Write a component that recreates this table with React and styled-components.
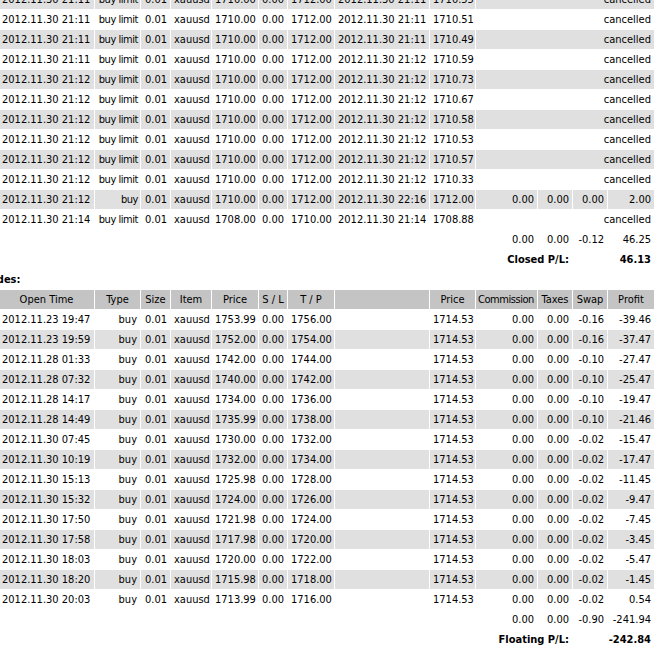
import React from "react";
import styled, { createGlobalStyle } from "styled-components";

const GlobalStyle = createGlobalStyle`
  html, body {
    margin: 0;
    padding: 0;
    background: #fff;
    overflow: hidden;
  }
  body {
    width: 654px;
    height: 649px;
  }
`;

// ticket, open time, type, size, item, price, s/l, t/p, close time, price, commission, taxes, swap, profit
const COLS = [54, 95, 45, 29, 40, 46, 28, 46, 94, 45, 61, 34, 34, 46];

const closed = [
  ["21:11", "buy limit", "1710.00", "1712.00", "21:11", "1710.55"],
  ["21:11", "buy limit", "1710.00", "1712.00", "21:11", "1710.51"],
  ["21:11", "buy limit", "1710.00", "1712.00", "21:11", "1710.49"],
  ["21:11", "buy limit", "1710.00", "1712.00", "21:12", "1710.59"],
  ["21:12", "buy limit", "1710.00", "1712.00", "21:12", "1710.73"],
  ["21:12", "buy limit", "1710.00", "1712.00", "21:12", "1710.67"],
  ["21:12", "buy limit", "1710.00", "1712.00", "21:12", "1710.58"],
  ["21:12", "buy limit", "1710.00", "1712.00", "21:12", "1710.53"],
  ["21:12", "buy limit", "1710.00", "1712.00", "21:12", "1710.57"],
  ["21:12", "buy limit", "1710.00", "1712.00", "21:12", "1710.33"],
  ["21:12", "buy", "1710.00", "1712.00", "22:16", "1712.00", ["0.00", "0.00", "0.00", "2.00"]],
  ["21:14", "buy limit", "1708.00", "1710.00", "21:14", "1708.88"],
];

const open = [
  ["2012.11.23 19:47", "1753.99", "1756.00", "-0.16", "-39.46"],
  ["2012.11.23 19:59", "1752.00", "1754.00", "-0.16", "-37.47"],
  ["2012.11.28 01:33", "1742.00", "1744.00", "-0.10", "-27.47"],
  ["2012.11.28 07:32", "1740.00", "1742.00", "-0.10", "-25.47"],
  ["2012.11.28 14:17", "1734.00", "1736.00", "-0.10", "-19.47"],
  ["2012.11.28 14:49", "1735.99", "1738.00", "-0.10", "-21.46"],
  ["2012.11.30 07:45", "1730.00", "1732.00", "-0.02", "-15.47"],
  ["2012.11.30 10:19", "1732.00", "1734.00", "-0.02", "-17.47"],
  ["2012.11.30 15:13", "1725.98", "1728.00", "-0.02", "-11.45"],
  ["2012.11.30 15:32", "1724.00", "1726.00", "-0.02", "-9.47"],
  ["2012.11.30 17:50", "1721.98", "1724.00", "-0.02", "-7.45"],
  ["2012.11.30 17:58", "1717.98", "1720.00", "-0.02", "-3.45"],
  ["2012.11.30 18:03", "1720.00", "1722.00", "-0.02", "-5.47"],
  ["2012.11.30 18:20", "1715.98", "1718.00", "-0.02", "-1.45"],
  ["2012.11.30 20:03", "1713.99", "1716.00", "-0.02", "0.54"],
];

const Sheet = styled.table`
  margin: -11px 0 0 -57px;
  border-collapse: separate;
  border-spacing: 1px;
  table-layout: fixed;
  width: ${COLS.reduce((a, b) => a + b, 0) + COLS.length + 1}px;
  font-family: "DejaVu Sans Condensed", "DejaVu Sans", sans-serif;
  font-stretch: condensed;
  font-size: 11px;
  color: #000;
`;

const Row = styled.tr`
  background: ${(p) => (p.$shade ? "#e0e0e0" : "transparent")};
`;

const HeadRow = styled.tr`
  background: #c4c4c4;
`;

const Cell = styled.td`
  box-sizing: border-box;
  height: 19px;
  padding: 1px 3px 0;
  line-height: 18px;
  white-space: nowrap;
  overflow: hidden;
  text-align: ${(p) => p.$align || "right"};
  font-weight: ${(p) => (p.$bold ? 700 : 400)};
  letter-spacing: ${(p) => (p.$tight ? "-0.45px" : "0")};
  ${(p) => p.$tight && "padding-left: 1px; padding-right: 2px;"}
`;

const HeadCell = styled(Cell)`
  text-align: center;
`;

const ClosedRow = ({ r, i }) => (
  <Row $shade={i % 2 === 0}>
    <Cell>{1023450 + i}</Cell>
    <Cell $align="left">2012.11.30 {r[0]}</Cell>
    <Cell $tight>{r[1]}</Cell>
    <Cell>0.01</Cell>
    <Cell $align="left">xauusd</Cell>
    <Cell>{r[2]}</Cell>
    <Cell>0.00</Cell>
    <Cell>{r[3]}</Cell>
    <Cell $align="left">2012.11.30 {r[4]}</Cell>
    <Cell>{r[5]}</Cell>
    {r[6] ? (
      r[6].map((v, k) => <Cell key={k}>{v}</Cell>)
    ) : (
      <Cell colSpan={4}>cancelled</Cell>
    )}
  </Row>
);

const OpenRow = ({ r, i }) => (
  <Row $shade={i % 2 === 1}>
    <Cell>{1019870 + i}</Cell>
    <Cell $align="left">{r[0]}</Cell>
    <Cell>buy</Cell>
    <Cell>0.01</Cell>
    <Cell $align="left">xauusd</Cell>
    <Cell>{r[1]}</Cell>
    <Cell>0.00</Cell>
    <Cell>{r[2]}</Cell>
    <Cell />
    <Cell>1714.53</Cell>
    <Cell>0.00</Cell>
    <Cell>0.00</Cell>
    <Cell>{r[3]}</Cell>
    <Cell>{r[4]}</Cell>
  </Row>
);

const TotalRow = ({ values }) => (
  <Row>
    <Cell colSpan={10} />
    {values.map((v, k) => (
      <Cell key={k}>{v}</Cell>
    ))}
  </Row>
);

const ResultRow = ({ label, value }) => (
  <Row>
    <Cell colSpan={10} />
    <Cell colSpan={2} $bold>
      {label}
    </Cell>
    <Cell colSpan={2} $bold>
      {value}
    </Cell>
  </Row>
);

const headers = ["Ticket", "Open Time", "Type", "Size", "Item", "Price", "S / L", "T / P", "", "Price", "Commission", "Taxes", "Swap", "Profit"];

export default function App() {
  return (
    <>
      <GlobalStyle />
      <Sheet>
        <colgroup>
          {COLS.map((w, k) => (
            <col key={k} style={{ width: w }} />
          ))}
        </colgroup>
        <tbody>
          {closed.map((r, i) => (
            <ClosedRow key={i} r={r} i={i} />
          ))}
          <TotalRow values={["0.00", "0.00", "-0.12", "46.25"]} />
          <ResultRow label="Closed P/L:" value="46.13" />
          <Row>
            <Cell colSpan={14} $align="left" $bold>
              Open Trades:
            </Cell>
          </Row>
          <HeadRow>
            {headers.map((h, k) => (
              <HeadCell key={k} $tight={h === "Commission"}>
                {h}
              </HeadCell>
            ))}
          </HeadRow>
          {open.map((r, i) => (
            <OpenRow key={i} r={r} i={i} />
          ))}
          <TotalRow values={["0.00", "0.00", "-0.90", "-241.94"]} />
          <ResultRow label="Floating P/L:" value="-242.84" />
        </tbody>
      </Sheet>
    </>
  );
}
